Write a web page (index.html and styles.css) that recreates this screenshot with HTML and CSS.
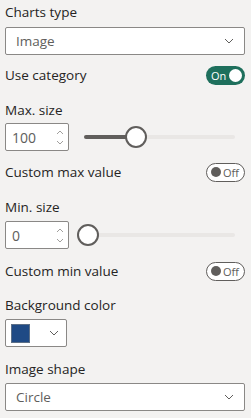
FILE: index.html
```html
<!DOCTYPE html>
<html>
<head>
<meta charset="utf-8">
<link rel="stylesheet" href="styles.css">
</head>
<body>
<div class="pane">
  <div class="label l-first">Charts type</div>
  <div class="dropdown">
    <span class="dd-text">Image</span>
    <svg class="chev" width="10" height="6" viewBox="0 0 10 6"><path d="M1 1 L5 5 L9 1" fill="none" stroke="#605e5c" stroke-width="1"/></svg>
  </div>

  <div class="row r-toggle1">
    <span class="label">Use category</span>
    <span class="toggle on"><span class="t-text">On</span><span class="knob"></span></span>
  </div>

  <div class="label l-max">Max. size</div>
  <div class="slider-row">
    <div class="spin">
      <span class="spin-val">100</span>
      <span class="arrows">
        <svg width="8" height="5" viewBox="0 0 8 5"><path d="M1 4 L4 1 L7 4" fill="none" stroke="#a19f9d" stroke-width="1"/></svg>
        <svg width="8" height="5" viewBox="0 0 8 5"><path d="M1 1 L4 4 L7 1" fill="none" stroke="#a19f9d" stroke-width="1"/></svg>
      </span>
    </div>
    <div class="slider">
      <div class="track"><div class="fill" style="width:34.5%"></div></div>
      <div class="thumb" style="left:34.5%"></div>
    </div>
  </div>

  <div class="row r-max">
    <span class="label">Custom max value</span>
    <span class="toggle off"><span class="knob"></span><span class="t-text">Off</span></span>
  </div>

  <div class="label l-min">Min. size</div>
  <div class="slider-row">
    <div class="spin">
      <span class="spin-val">0</span>
      <span class="arrows">
        <svg width="8" height="5" viewBox="0 0 8 5"><path d="M1 4 L4 1 L7 4" fill="none" stroke="#a19f9d" stroke-width="1"/></svg>
        <svg width="8" height="5" viewBox="0 0 8 5"><path d="M1 1 L4 4 L7 1" fill="none" stroke="#a19f9d" stroke-width="1"/></svg>
      </span>
    </div>
    <div class="slider">
      <div class="track"><div class="fill" style="width:0%"></div></div>
      <div class="thumb" style="left:4px"></div>
    </div>
  </div>

  <div class="row r-min">
    <span class="label">Custom min value</span>
    <span class="toggle off"><span class="knob"></span><span class="t-text">Off</span></span>
  </div>

  <div class="label l-bg">Background color</div>
  <div class="color-pick">
    <span class="swatch"></span>
    <svg class="chev" width="10" height="6" viewBox="0 0 10 6"><path d="M1 1 L5 5 L9 1" fill="none" stroke="#605e5c" stroke-width="1"/></svg>
  </div>

  <div class="label l-shape">Image shape</div>
  <div class="dropdown">
    <span class="dd-text">Circle</span>
    <svg class="chev" width="10" height="6" viewBox="0 0 10 6"><path d="M1 1 L5 5 L9 1" fill="none" stroke="#605e5c" stroke-width="1"/></svg>
  </div>
</div>
</body>
</html>
```

FILE: styles.css
```css
html, body {
  margin: 0;
  padding: 0;
  background: #f3f2f1;
}
body {
  font-family: "Open Sans", "Noto Sans", sans-serif;
  font-size: 13.5px;
  color: #252423;
}
.pane {
  padding: 0 6px 0 5px;
  display: flex;
  flex-direction: column;
}
.label {
  line-height: 20px;
  height: 20px;
  white-space: nowrap;
}
.l-first { margin-top: 2px; margin-bottom: 5px; }
.l-max { margin-top: 15px; margin-bottom: 3px; }
.l-min { margin-top: 15px; margin-bottom: 4px; }
.l-bg { margin-top: 14px; margin-bottom: 4px; }
.l-shape { margin-top: 12px; margin-bottom: 4px; }
.dropdown {
  box-sizing: border-box;
  height: 28px;
  border: 1px solid #8a8886;
  border-radius: 2px;
  background: #fff;
  display: flex;
  align-items: center;
  justify-content: space-between;
  padding: 0 10px 0 10px;
}
.dd-text { color: #605e5c; }
.chev { display: block; }
.row {
  display: flex;
  align-items: center;
  justify-content: space-between;
  height: 20px;
}
.r-toggle1 { margin-top: 10px; }
.r-max { margin-top: 11px; }
.r-min { margin-top: 12px; }
.toggle {
  box-sizing: border-box;
  width: 39px;
  height: 19px;
  border-radius: 10px;
  display: flex;
  align-items: center;
  font-size: 11px;
  line-height: 1;
}
.toggle.on {
  background: #1e6f5c;
  color: #fff;
  justify-content: space-between;
  padding: 0 3px 0 5px;
}
.toggle.on .knob {
  width: 13px;
  height: 13px;
  border-radius: 50%;
  background: #fff;
}
.toggle.off {
  border: 1px solid #605e5c;
  background: #fff;
  color: #605e5c;
  padding: 0 4px 0 4px;
  gap: 2px;
}
.toggle.off .knob {
  width: 10px;
  height: 10px;
  border-radius: 50%;
  background: #605e5c;
}
.slider-row {
  display: flex;
  align-items: center;
  height: 28px;
}
.spin {
  box-sizing: border-box;
  width: 64px;
  height: 28px;
  border: 1px solid #8a8886;
  border-radius: 2px;
  background: #fff;
  display: flex;
  align-items: center;
  justify-content: space-between;
  padding: 0 4px 0 6px;
}
.spin-val { color: #605e5c; font-size: 14px; }
.arrows {
  display: flex;
  flex-direction: column;
  gap: 5px;
}
.arrows svg { display: block; }
.slider {
  position: relative;
  flex: 1;
  height: 28px;
  margin: 0 10px 0 15px;
  display: flex;
  align-items: center;
}
.track {
  width: 100%;
  height: 4px;
  border-radius: 2px;
  background: #e9e7e5;
  overflow: hidden;
}
.fill {
  height: 100%;
  background: #605e5c;
}
.thumb {
  position: absolute;
  top: 50%;
  width: 22px;
  height: 22px;
  box-sizing: border-box;
  border: 2px solid #605e5c;
  border-radius: 50%;
  background: #fff;
  transform: translate(-50%, -50%);
}
.color-pick {
  box-sizing: border-box;
  width: 62px;
  height: 28px;
  border: 1px solid #8a8886;
  border-radius: 2px;
  background: #fff;
  display: flex;
  align-items: center;
  justify-content: space-between;
  padding: 0 7px 0 5px;
}
.swatch {
  width: 19px;
  height: 19px;
  box-sizing: border-box;
  background: #1f4a85;
  border: 1px solid #5c6f87;
}
```
